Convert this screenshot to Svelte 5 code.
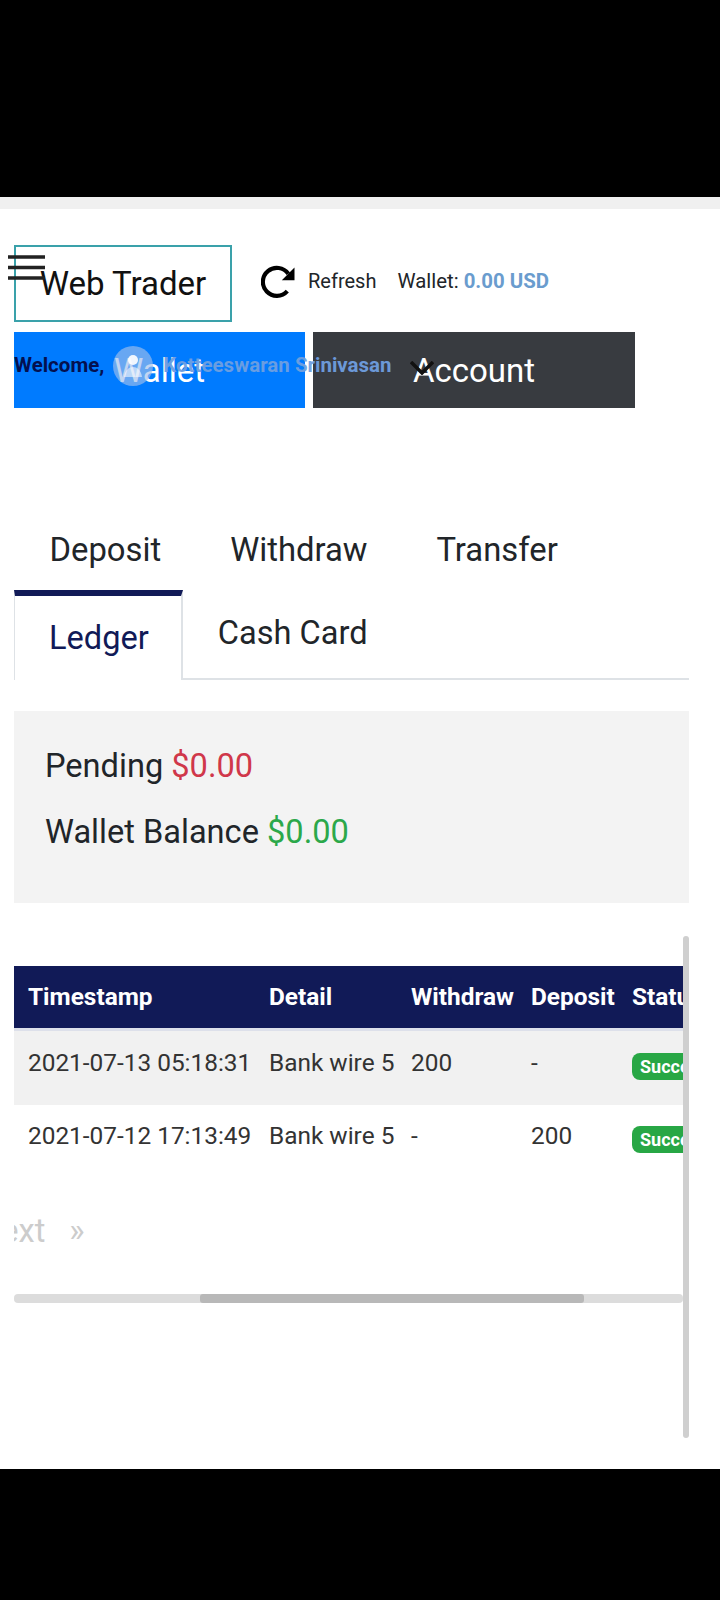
<script lang="ts">
  const tabsTop = ['Deposit', 'Withdraw', 'Transfer'];
  const rows = [
    { time: '2021-07-13 05:18:31', detail: 'Bank wire 5', out: '200', dep: '-' },
    { time: '2021-07-12 17:13:49', detail: 'Bank wire 5', out: '-', dep: '200' },
  ];
</script>

<div class="phone">
  <div class="statusbar"></div>
  <div class="strip"></div>

  <main class="page">
    <header class="head">
      <div class="brand">Web Trader</div>
      <svg class="refresh" viewBox="0 0 34 34" aria-hidden="true">
        <path d="M26.300 26.200A14 14 0 1 1 27.300 8.800" fill="none" stroke="#000" stroke-width="4.200" />
        <path d="M33.500 2.500V15.200H20.800Z" fill="#000" />
      </svg>
      <span class="refresh-label">Refresh</span>
      <span class="wallet">Wallet: <b>0.00 USD</b></span>
    </header>

    <div class="actions">
      <div class="btn blue">Wallet</div>
      <div class="btn dark">Account</div>
    </div>

    <nav class="tabs-top">
      {#each tabsTop as t}<span>{t}</span>{/each}
    </nav>
    <nav class="tabs-sub">
      <span class="active">Ledger</span>
      <span class="other">Cash Card</span>
    </nav>

    <section class="summary">
      <p>Pending <span class="red">$0.00</span></p>
      <p>Wallet Balance <span class="green">$0.00</span></p>
    </section>

    <div class="scrollarea">
      <div class="clip">
        <div class="row thead">
          <div class="c1">Timestamp</div>
          <div class="c2">Detail</div>
          <div class="c3">Withdraw</div>
          <div class="c4">Deposit</div>
          <div class="c5">Status</div>
        </div>
        {#each rows as r, i}
          <div class="row tbody" class:odd={i === 0}>
            <div class="c1">{r.time}</div>
            <div class="c2">{r.detail}</div>
            <div class="c3">{r.out}</div>
            <div class="c4">{r.dep}</div>
            <div class="c5"><span class="badge">Success</span></div>
          </div>
        {/each}
        <div class="pager"><span class="next">Next</span><span class="last">»</span></div>
        <div class="hbar"><div class="hthumb"></div></div>
      </div>
      <div class="vbar"></div>
    </div>
  </main>

  <div class="bottombar"></div>

  <!-- header pieces that sit over the page content in the source -->
  <svg class="burger" viewBox="0 0 37 26" aria-hidden="true">
    <path d="M0 2H37M0 12.500H37M0 23H37" stroke="#222" stroke-width="3.500" />
  </svg>
  <div class="welcome">
    <span class="hello">Welcome,</span>
    <span class="avatar">
      <svg viewBox="0 0 40 40" aria-hidden="true">
        <circle cx="20" cy="14" r="5" fill="#fff" opacity=".9" />
        <path d="M11 31C12 24 16 21 20 21S28 24 29 31Z" fill="#fff" opacity=".55" />
      </svg>
    </span>
    <span class="name">Kotteeswaran Srinivasan</span>
    <svg class="chev" viewBox="0 0 24 14" aria-hidden="true">
      <path d="M1 1L12 12L23 1" fill="none" stroke="#111" stroke-width="3.500" />
    </svg>
  </div>
</div>

<style>
  :global(body) {
    margin: 0;
    background: #000;
  }
  .phone {
    position: relative;
    width: 720px;
    height: 1600px;
    display: flex;
    flex-direction: column;
    font-family: Roboto, "Liberation Sans", sans-serif;
    color: #212529;
    overflow: hidden;
  }
  .statusbar {
    height: 197px;
    flex: none;
    background: #000;
  }
  .strip {
    height: 12px;
    flex: none;
    background: #f0f0f0;
  }
  .page {
    flex: 1;
    min-height: 0;
    background: #fff;
    padding: 36px 0 0 14px;
  }
  .bottombar {
    height: 131px;
    flex: none;
    background: #000;
  }

  .head {
    display: flex;
    align-items: center;
  }
  .brand {
    box-sizing: border-box;
    width: 218px;
    height: 77px;
    margin-right: 29px;
    padding-bottom: 1px;
    display: flex;
    align-items: center;
    justify-content: center;
    border: 2px solid #3aa1aa;
    font-size: 33px;
    color: #111;
  }
  .refresh {
    width: 34px;
    height: 34px;
    margin-top: -4px;
  }
  .refresh-label {
    margin: -6px 0 0 13px;
    font-size: 20px;
  }
  .wallet {
    margin: -6px 0 0 21px;
    font-size: 20.400px;
  }
  .wallet b {
    color: #6a9cce;
    font-weight: 700;
  }

  .actions {
    display: flex;
    gap: 8px;
    margin-top: 10px;
  }
  .btn {
    height: 76px;
    display: flex;
    align-items: center;
    justify-content: center;
    font-size: 33px;
    color: #fff;
  }
  .blue {
    width: 291px;
    background: #007bff;
  }
  .dark {
    width: 322px;
    background: #383b40;
  }

  .tabs-top {
    display: flex;
    margin-top: 102px;
    padding-left: 1px;
    height: 80px;
    font-size: 32.800px;
    line-height: 80px;
  }
  .tabs-top span {
    padding: 0 34.500px;
  }
  .tabs-sub {
    box-sizing: border-box;
    width: 675px;
    height: 90px;
    display: flex;
    border-bottom: 2px solid #dee2e6;
    font-size: 32.600px;
  }
  .tabs-sub span {
    box-sizing: border-box;
  }
  .active {
    height: 90px;
    padding: 0 32px 0 34px;
    border-top: 6px solid #111a57;
    border-left: 1px solid #dee2e6;
    border-right: 2px solid #dee2e6;
    background: #fff;
    color: #111a57;
    line-height: 84px;
  }
  .other {
    padding: 0 35px;
    line-height: 86px;
  }

  .summary {
    box-sizing: border-box;
    width: 675px;
    height: 192px;
    margin-top: 31px;
    padding: 36px 31px 0;
    background: #f3f3f3;
    font-size: 32.600px;
  }
  .summary p {
    margin: 0 0 28px;
    line-height: 38px;
  }
  .red {
    color: #d0374a;
  }
  .green {
    color: #2ba84a;
  }

  .scrollarea {
    display: flex;
    width: 675px;
    height: 502px;
    margin-top: 33px;
  }
  .clip {
    width: 669px;
    overflow: hidden;
    padding-top: 30px;
  }
  .vbar {
    width: 6px;
    height: 502px;
    border-radius: 3px;
    background: #cfcfcf;
  }
  .row {
    display: flex;
    font-size: 24.400px;
    white-space: nowrap;
  }
  .row > div {
    flex: none;
    box-sizing: border-box;
  }
  .c1 {
    width: 255px;
    padding-left: 14px;
  }
  .c2 {
    width: 142px;
  }
  .c3 {
    width: 120px;
  }
  .c4 {
    width: 101px;
  }
  .c5 {
    width: 100px;
  }
  .thead {
    height: 62px;
    line-height: 62px;
    background: #111a57;
    color: #fff;
    font-weight: 700;
    box-shadow: 0 3px 0 #dde0ea;
    position: relative;
  }
  .tbody {
    height: 74px;
    line-height: 62px;
    color: #333;
  }
  .tbody.odd {
    margin-top: 3px;
    background: #f1f1f1;
    line-height: 64px;
  }
  .badge {
    display: inline-block;
    height: 27px;
    padding: 0 8px;
    border-radius: 8px;
    background: #28a745;
    color: #fff;
    font-size: 18px;
    font-weight: 700;
    line-height: 27px;
    vertical-align: -2px;
  }
  .pager {
    height: 38px;
    margin: 33px 0 44px -36px;
    display: flex;
    color: #ccc;
    font-size: 32.600px;
    line-height: 38px;
  }
  .last {
    margin-left: 24px;
  }
  .hbar {
    height: 9px;
    border-radius: 4px;
    background: #dcdcdc;
  }
  .hthumb {
    width: 384px;
    height: 9px;
    margin-left: 186px;
    border-radius: 3px;
    background: #b8b8b8;
  }

  .burger {
    position: absolute;
    left: 8px;
    top: 255px;
    width: 37px;
    height: 26px;
  }
  .welcome {
    position: absolute;
    left: 14px;
    top: 344px;
    display: flex;
    align-items: center;
    height: 42px;
    font-size: 20.500px;
    font-weight: 700;
    white-space: nowrap;
  }
  .hello {
    color: #04104f;
  }
  .avatar {
    width: 40px;
    height: 40px;
    margin: 2px 0 0 9px;
    border-radius: 50%;
    background: rgba(160, 190, 235, 0.65);
  }
  .avatar svg {
    display: block;
    width: 40px;
    height: 40px;
  }
  .name {
    margin-left: 10px;
    color: #6f9fe0;
    opacity: 0.95;
  }
  .chev {
    width: 24px;
    height: 14px;
    margin: 6px 0 0 18px;
  }
</style>
